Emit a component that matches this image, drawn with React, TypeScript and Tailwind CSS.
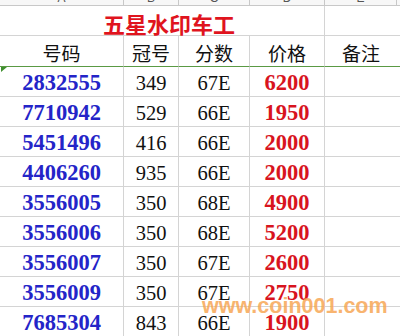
import React from "react";

const rows: [string, string, string, string][] = [
  ["2832555", "349", "67E", "6200"],
  ["7710942", "529", "66E", "1950"],
  ["5451496", "416", "66E", "2000"],
  ["4406260", "935", "66E", "2000"],
  ["3556005", "350", "68E", "4900"],
  ["3556006", "350", "68E", "5200"],
  ["3556007", "350", "67E", "2600"],
  ["3556009", "350", "67E", "2750"],
  ["7685304", "843", "66E", "1900"],
];

const serif = { fontFamily: '"Liberation Serif", "Noto Sans CJK SC", serif' };
const cjk = { fontFamily: '"Noto Sans CJK SC", "Liberation Serif", serif' };

export default function App() {
  const cell = "border-r border-b border-[#d4d4d4] flex items-center justify-center";
  return (
    <div className="relative w-[400px] h-[336px] overflow-hidden bg-white">
      <div className="grid grid-cols-[124px_55px_71px_75px_72px_3px] w-[400px]">
        {["A", "B", "C", "D", "E"].map((l) => (
          <div key={l} className="h-[6px] overflow-hidden border-r border-b border-[#c8c8c8] flex justify-center bg-[#f7f7f7]">
            <span className="text-[12px] leading-[12px] text-[#555] mt-[-8px]" style={{ fontFamily: '"Liberation Sans", sans-serif' }}>{l}</span>
          </div>
        ))}
        <div className="h-[6px] border-b border-[#c8c8c8] bg-[#f7f7f7]" />

        <div className={`col-span-4 h-[30px] ${cell} pl-[14px] pt-[5px]`}>
          <span className="text-[22px] leading-none font-bold text-[#e0141e]" style={cjk}>五星水印车工</span>
        </div>
        <div className="h-[30px] border-b border-[#d4d4d4]" />
        <div className="h-[30px] border-b border-[#d4d4d4]" />

        {["号码", "冠号", "分数", "价格", "备注"].map((h, i) => (
          <div key={h} className={`h-[31px] flex items-center justify-center pt-[3px] border-b border-b-[#5a9a44] ${i < 4 ? "border-r border-r-[#d4d4d4]" : ""}`}>
            <span className="text-[19px] leading-none text-[#111]" style={cjk}>{h}</span>
          </div>
        ))}
        <div className="h-[31px] border-b border-[#5a9a44]" />

        {rows.map((r, idx) => (
          <React.Fragment key={idx}>
            <div className={`relative h-[30px] ${cell} pt-[3px]`}>
              {idx === 0 && (
                <svg className="absolute left-0 top-0" width="7" height="5" viewBox="0 0 7 5">
                  <polygon points="1,0 7,0 1,5" fill="#3f8f2f" />
                </svg>
              )}
              <span className="text-[22.5px] leading-none font-bold text-[#2424c8]" style={serif}>{r[0]}</span>
            </div>
            <div className={`h-[30px] ${cell} pt-[3px]`}>
              <span className="text-[20.5px] leading-none text-[#111]" style={serif}>{r[1]}</span>
            </div>
            <div className={`h-[30px] ${cell} pt-[3px]`}>
              <span className="text-[20.5px] leading-none text-[#111]" style={serif}>{r[2]}</span>
            </div>
            <div className={`h-[30px] ${cell} pt-[3px]`}>
              <span className="text-[22.5px] leading-none font-bold text-[#d8141e]" style={serif}>{r[3]}</span>
            </div>
            <div className="h-[30px] border-b border-[#d4d4d4]" />
            <div className="h-[30px] border-b border-[#d4d4d4]" />
          </React.Fragment>
        ))}
      </div>

      <div
        className="absolute left-[202px] top-[296px] text-[21.5px] leading-none font-bold text-[#f7a857] opacity-85"
        style={{ fontFamily: '"Liberation Sans", Arial, sans-serif' }}
      >
        www.coin001.com
      </div>
    </div>
  );
}
